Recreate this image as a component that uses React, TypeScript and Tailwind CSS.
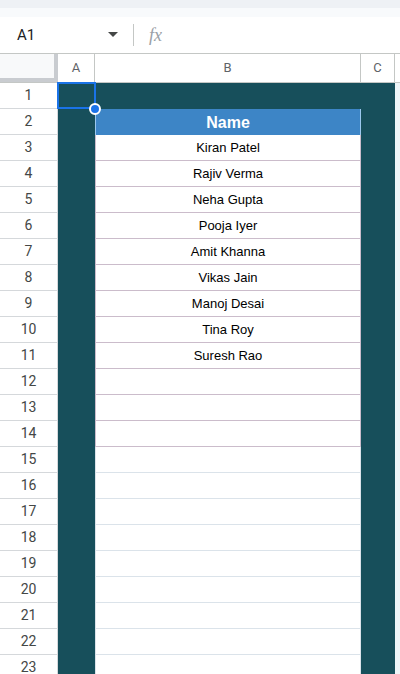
export default function App() {
  const names = [
    "Kiran Patel",
    "Rajiv Verma",
    "Neha Gupta",
    "Pooja Iyer",
    "Amit Khanna",
    "Vikas Jain",
    "Manoj Desai",
    "Tina Roy",
    "Suresh Rao",
  ];
  const rows = Array.from({ length: 23 }, (_, i) => i + 1);

  const cellB = (n: number) => {
    if (n === 1) return <div className="h-full w-[266px] bg-[#174f5b]" />;
    if (n === 2)
      return (
        <div className="flex h-full w-[266px] items-center justify-center border-x border-[#9cc8ee] bg-[#3d85c6] pt-[2px] text-[16px] font-bold text-white">
          Name
        </div>
      );
    const name = names[n - 3];
    const line = n <= 14 ? "border-[#cbbccb]" : "border-[#dbe3ea]";
    return (
      <div
        className={`flex h-full w-[266px] items-center justify-center border-b border-l border-r bg-white text-[13px] text-black ${line}`}
      >
        {name ?? ""}
      </div>
    );
  };

  return (
    <div className="h-[674px] w-[400px] overflow-hidden bg-white font-['Roboto',sans-serif]">
      <div className="h-[8px] bg-[#eef1f5]" />
      <div className="h-[9px] bg-[#f8fafc]" />
      {/* formula bar */}
      <div className="flex h-[37px] items-center border-b border-[#c4c7c5]">
        <div className="w-[100px] pl-[17px] text-[15px] text-[#202124]">A1</div>
        <svg width="10" height="6" viewBox="0 0 10 6" className="ml-[8px]">
          <path d="M0 0 L10 0 L5 5 Z" fill="#444746" />
        </svg>
        <div className="ml-[15px] h-[22px] w-px bg-[#c4c7c5]" />
        <span className="ml-[15px] font-['Liberation_Serif',serif] text-[18px] italic text-[#9aa0a6]">
          fx
        </span>
      </div>
      {/* column headers */}
      <div className="flex h-[29px] border-b border-[#c4c7c5] text-[13px] text-[#5f6368]">
        <div className="h-full w-[58px] border-b-[4px] border-r-[4px] border-[#c9ccd0] bg-[#f8f9fa]" />
        <div className="flex w-[37px] items-center justify-center border-r border-[#c4c7c5]">A</div>
        <div className="flex w-[266px] items-center justify-center border-r border-[#c4c7c5]">B</div>
        <div className="flex w-[34px] items-center justify-center border-r border-[#c4c7c5]">C</div>
        <div className="flex-1" />
      </div>
      {/* rows */}
      <div className="relative">
        {rows.map((n) => (
          <div key={n} className="flex h-[26px]">
            <div className="flex w-[58px] items-center justify-center border-b border-r border-[#d5d8db] text-[14px] text-[#444746]">
              {n}
            </div>
            <div className="h-full w-[37px] bg-[#174f5b]" />
            <div className="h-full bg-[#174f5b]">
              <div className="h-full font-['Liberation_Sans',Arial,sans-serif]">{cellB(n)}</div>
            </div>
            <div className="h-full w-[34px] bg-[#174f5b]" />
            <div className="h-full flex-1 bg-[#eef5f8]" />
          </div>
        ))}
        {/* selection on A1 */}
        <div className="pointer-events-none absolute left-[57px] top-[-1px] h-[27px] w-[39px] border-2 border-[#1a73e8]" />
        <div className="absolute left-[89px] top-[20px] h-[12px] w-[12px] rounded-full border-2 border-white bg-[#1a73e8]" />
      </div>
    </div>
  );
}
